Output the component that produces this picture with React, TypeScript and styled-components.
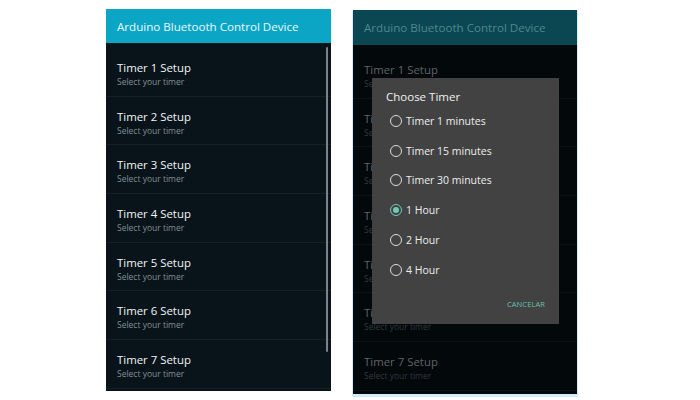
import React from "react";
import styled, { createGlobalStyle } from "styled-components";

const Global = createGlobalStyle`
  html, body { margin: 0; padding: 0; background: #ffffff; }
  body { font-family: "Open Sans", "Noto Sans", sans-serif; }
`;

const Stage = styled.div`
  display: flex;
  align-items: flex-start;
  gap: 22px;
  padding: 9px 0 0 106px;
  width: 700px;
  height: 400px;
  box-sizing: border-box;
`;

const Phone = styled.div<{ $dim?: boolean }>`
  position: relative;
  width: ${(p) => (p.$dim ? 224 : 225)}px;
  height: ${(p) => (p.$dim ? 384 : 382)}px;
  margin-top: ${(p) => (p.$dim ? 1 : 0)}px;
  background: ${(p) => (p.$dim ? "#03080b" : "#08141a")};
  display: flex;
  flex-direction: column;
  overflow: hidden;
  box-shadow: ${(p) => (p.$dim ? "0 2px 0 1px #d3ebf9" : "none")};
`;

const Header = styled.div<{ $dim?: boolean }>`
  height: ${(p) => (p.$dim ? 35 : 34)}px;
  flex: none;
  background: ${(p) => (p.$dim ? "#0a4752" : "#0ba6c6")};
  color: ${(p) => (p.$dim ? "#4f8690" : "#eaf8fb")};
  display: flex;
  align-items: center;
  padding-left: 11px;
  font-size: 11.6px;
`;

const List = styled.div`
  position: relative;
  flex: 1;
  padding-top: 5px;
  display: flex;
  flex-direction: column;
`;

const Row = styled.div<{ $dim?: boolean }>`
  height: 48.7px;
  flex: none;
  box-sizing: border-box;
  padding: 12px 0 0 11px;
  border-bottom: 1px solid ${(p) => (p.$dim ? "#0a1216" : "#13212a")};
  display: flex;
  flex-direction: column;
`;

const Title = styled.div<{ $dim?: boolean }>`
  font-size: 11.4px;
  line-height: 16px;
  color: ${(p) => (p.$dim ? "#5f6467" : "#f2f4f5")};
`;

const Sub = styled.div<{ $dim?: boolean }>`
  font-size: 8.5px;
  line-height: 12px;
  color: ${(p) => (p.$dim ? "#31383c" : "#858d92")};
`;

const Scrollbar = styled.div`
  position: absolute;
  right: 3px;
  top: 4px;
  width: 2px;
  height: 305px;
  border-radius: 1px;
  background: #7c8287;
`;

const Dialog = styled.div`
  position: absolute;
  left: 19px;
  top: 68px;
  width: 187px;
  height: 246px;
  background: #424242;
  box-sizing: border-box;
  padding: 12px 0 0 14px;
  display: flex;
  flex-direction: column;
`;

const DialogTitle = styled.div`
  font-size: 11.5px;
  color: #f1f1f1;
  line-height: 14px;
  margin-bottom: 2px;
`;

const Option = styled.div`
  display: flex;
  align-items: center;
  gap: 4px;
  height: 29.8px;
  color: #eeeeee;
  font-size: 10.5px;
  margin-left: 4px;
`;

const Radio = styled.span<{ $on?: boolean }>`
  width: 10px;
  height: 10px;
  border-radius: 50%;
  border: 1.5px solid ${(p) => (p.$on ? "#71c9b8" : "#dcdcdc")};
  display: flex;
  align-items: center;
  justify-content: center;
  flex: none;
  &::after {
    content: "";
    width: 6px;
    height: 6px;
    border-radius: 50%;
    background: ${(p) => (p.$on ? "#71c9b8" : "transparent")};
  }
`;

const Actions = styled.div`
  display: flex;
  justify-content: flex-end;
  padding-right: 14px;
  margin-top: 14px;
`;

const Cancel = styled.span`
  font-size: 7.5px;
  color: #66c0ac;
  letter-spacing: 0.1px;
`;

const timers = [1, 2, 3, 4, 5, 6, 7];
const options = [
  "Timer 1 minutes",
  "Timer 15 minutes",
  "Timer 30 minutes",
  "1 Hour",
  "2 Hour",
  "4 Hour",
];

export default function App() {
  return (
    <>
      <Global />
      <Stage>
        <Phone>
          <Header>Arduino Bluetooth Control Device</Header>
          <List>
            <Scrollbar />
            {timers.map((t) => (
              <Row key={t}>
                <Title>Timer {t} Setup</Title>
                <Sub>Select your timer</Sub>
              </Row>
            ))}
          </List>
        </Phone>
        <Phone $dim>
          <Header $dim>Arduino Bluetooth Control Device</Header>
          <List>
            {timers.map((t) => (
              <Row key={t} $dim>
                <Title $dim>Timer {t} Setup</Title>
                <Sub $dim>Select your timer</Sub>
              </Row>
            ))}
          </List>
          <Dialog>
            <DialogTitle>Choose Timer</DialogTitle>
            {options.map((o) => (
              <Option key={o}>
                <Radio $on={o === "1 Hour"} />
                {o}
              </Option>
            ))}
            <Actions>
              <Cancel>CANCELAR</Cancel>
            </Actions>
          </Dialog>
        </Phone>
      </Stage>
    </>
  );
}
